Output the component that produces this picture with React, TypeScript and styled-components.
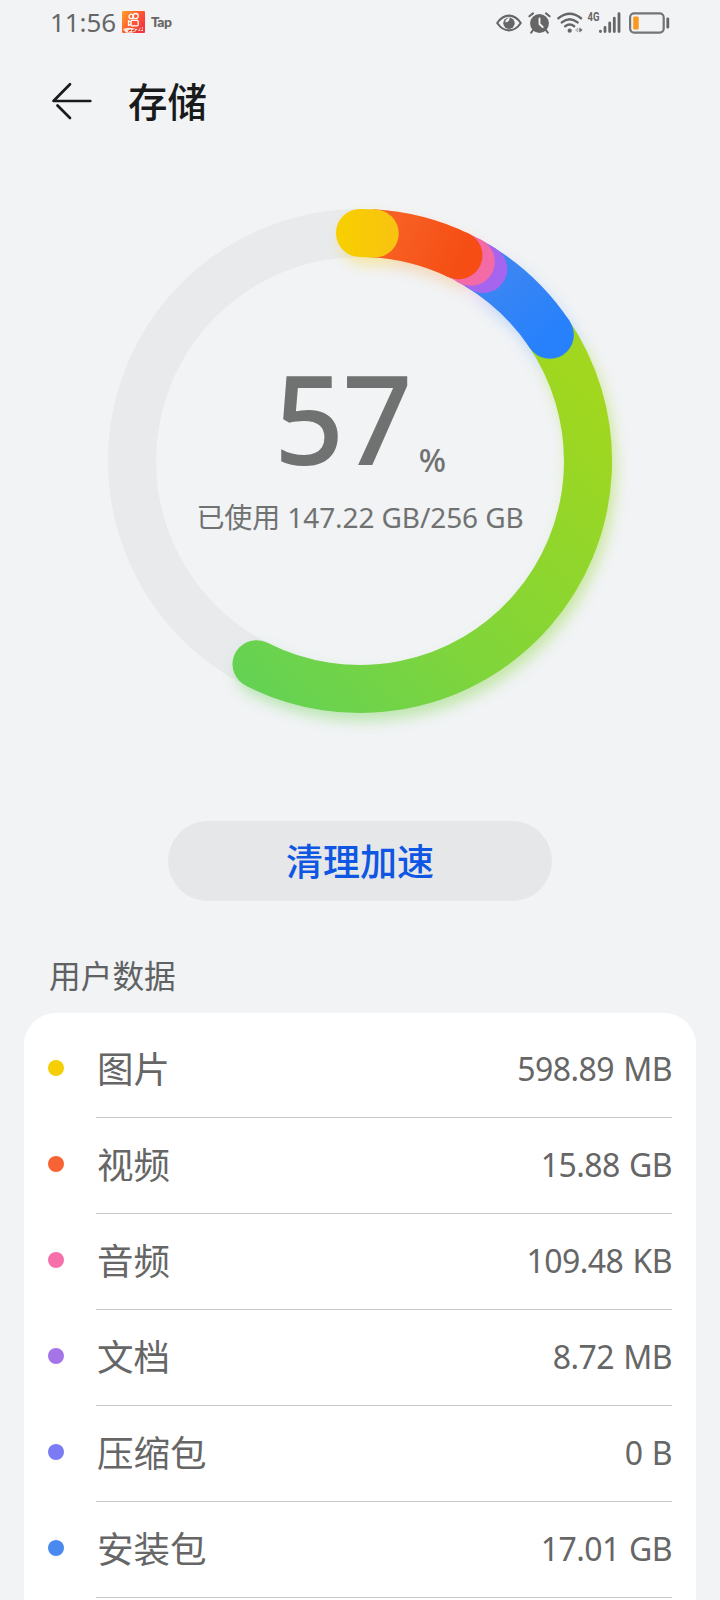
import React from "react";
import styled, { createGlobalStyle } from "styled-components";

const INK = "#666666";
const BACKGROUND = "#f1f3f5";

const GlobalStyle = createGlobalStyle`
  *, *::before, *::after { box-sizing: border-box; }
  html, body { margin: 0; background: ${BACKGROUND}; }
  body {
    font-family: "Noto Sans", "Noto Sans CJK SC", sans-serif;
    color: ${INK};
    overflow: hidden;
  }
`;

const Screen = styled.main`
  width: 720px;
  height: 1600px;
  overflow: hidden;
  display: flex;
  flex-direction: column;
  background: ${BACKGROUND};

  > * { flex-shrink: 0; }
`;

const StatusBar = styled.div`
  display: flex;
  justify-content: space-between;
  height: 45px;
  padding: 0 49px 0 50px;
`;

const StatusGroup = styled.div<{ $gap: number }>`
  display: flex;
  align-items: center;
  gap: ${(p) => p.$gap}px;
`;

const Clock = styled.span`
  width: 66px;
  padding-bottom: 2px;
  font-size: 26px;
  line-height: 42px;
  letter-spacing: -0.1px;
  white-space: nowrap;
`;

const TapMark = styled.span`
  padding-bottom: 2px;
  font-family: Lato, sans-serif;
  font-size: 14px;
  font-weight: 900;
  line-height: 42px;
  letter-spacing: -0.6px;
`;

const Header = styled.header`
  display: flex;
  align-items: center;
  gap: 35px;
  height: 111px;
  padding-left: 51px;
`;

const Title = styled.h1`
  margin: 0;
  padding-bottom: 2px;
  font-family: "Noto Sans CJK SC", sans-serif;
  font-size: 39.5px;
  font-weight: 500;
  line-height: 56px;
  color: #191a1c;
`;

const Gauge = styled.section`
  display: grid;
  justify-items: center;
  height: 665px;

  > * { grid-area: 1 / 1; }
`;

const Readout = styled.div`
  display: flex;
  flex-direction: column;
  align-items: center;
  padding-top: 200px;
`;

const Percent = styled.div`
  display: flex;
  align-items: baseline;
  height: 139px;
  color: #707272;
`;

const PercentValue = styled.span`
  font-size: 123px;
  font-weight: 500;
  line-height: 124px;
  letter-spacing: -2px;
`;

const PercentSign = styled.span`
  font-size: 32px;
  font-weight: 500;
  line-height: 40px;
  margin-left: 8px;
  transform: translateY(7px);
`;

const Usage = styled.p`
  margin: 0;
  font-size: 28px;
  line-height: 44px;
  letter-spacing: -0.1px;
  white-space: nowrap;
  color: #707272;
`;

const CleanButton = styled.button`
  align-self: center;
  width: 384px;
  height: 80px;
  padding: 0 0 3px;
  border: 0;
  border-radius: 40px;
  background: #e5e7e9;
  color: #0f56e3;
  font-family: "Noto Sans CJK SC", sans-serif;
  font-size: 37px;
  font-weight: 500;
`;

const SectionTitle = styled.h2`
  margin: 0;
  height: 112px;
  padding: 50px 0 0 49px;
  font-family: "Noto Sans CJK SC", sans-serif;
  font-size: 31.7px;
  font-weight: 400;
  line-height: 46px;
  color: #606163;
`;

const Card = styled.ul`
  margin: 0 24px;
  padding: 8px 24px 0;
  list-style: none;
  flex: 1 0 0;
  min-height: 0;
  border-radius: 32px 32px 0 0;
  background: #fff;
`;

const Row = styled.li`
  display: flex;
  align-items: center;
  height: 96px;
`;

const Dot = styled.span<{ $color: string }>`
  flex: none;
  width: 16px;
  height: 16px;
  margin: 0 32px 2px 0;
  border-radius: 50%;
  background: ${(p) => p.$color};
`;

const RowBody = styled.div`
  flex: 1;
  display: flex;
  align-items: center;
  justify-content: space-between;
  height: 97px;
  border-bottom: 1px solid #c9c9c9;
`;

const RowLabel = styled.span`
  padding: 0 0 2px 1px;
  font-family: "Noto Sans CJK SC", sans-serif;
  font-size: 36.5px;
  line-height: 52px;
`;

const RowValue = styled.span`
  padding-top: 1px;
  font-size: 32px;
  line-height: 46px;
  letter-spacing: -0.55px;
  word-spacing: 1.5px;
`;

const CENTER_X = 280;
const CENTER_Y = 305;
const RADIUS = 228;

function pointAt(degrees: number) {
  const a = (degrees * Math.PI) / 180;
  return {
    x: CENTER_X + RADIUS * Math.sin(a),
    y: CENTER_Y - RADIUS * Math.cos(a),
  };
}

function arcPath(start: number, end: number) {
  const from = pointAt(start);
  const to = pointAt(end);
  const large = end - start > 180 ? 1 : 0;
  return `M${from.x} ${from.y}A${RADIUS} ${RADIUS} 0 ${large} 1 ${to.x} ${to.y}`;
}

const SEGMENTS = [
  { start: 55, end: 207, paint: "url(#green)", glow: "url(#green)" },
  { start: 31, end: 56.4, paint: "url(#blue)", glow: "#7aaef8" },
  { start: 28, end: 32.7, paint: "#a565ee", glow: "#c9b0f8" },
  { start: 25, end: 29.1, paint: "#f36aa6", glow: "#f8c0d0" },
  { start: 3, end: 25.6, paint: "url(#orange)", glow: "#fbb060" },
  { start: 0, end: 3.7, paint: "url(#yellow)", glow: "#f7d430" },
];

function Segments({ glow = false }: { glow?: boolean }) {
  return (
    <g fill="none" strokeWidth="48">
      {SEGMENTS.map((s) => {
        const cap = pointAt(s.end);
        const color = glow ? s.glow : s.paint;
        return (
          <g key={s.end}>
            <path d={arcPath(s.start, s.end)} stroke={color} />
            <circle cx={cap.x} cy={cap.y} r="24" fill={color} stroke="none" />
          </g>
        );
      })}
      <circle cx={CENTER_X} cy={CENTER_Y - RADIUS} r="24" fill={glow ? "#f7d430" : "url(#yellow)"} stroke="none" />
    </g>
  );
}

function Ring() {
  return (
    <svg width="560" height="620" viewBox="0 0 560 620">
      <defs>
        <linearGradient id="green" gradientUnits="userSpaceOnUse" x1="480" y1="200" x2="155" y2="510">
          <stop offset="0" stopColor="#a1d71e" />
          <stop offset="0.6" stopColor="#80d53a" />
          <stop offset="1" stopColor="#65d253" />
        </linearGradient>
        <linearGradient id="blue" gradientUnits="userSpaceOnUse" x1="400" y1="95" x2="470" y2="180">
          <stop offset="0" stopColor="#4387ef" />
          <stop offset="1" stopColor="#2781fc" />
        </linearGradient>
        <linearGradient id="orange" gradientUnits="userSpaceOnUse" x1="310" y1="75" x2="385" y2="105">
          <stop offset="0" stopColor="#f76024" />
          <stop offset="1" stopColor="#f54d13" />
        </linearGradient>
        <linearGradient id="yellow" gradientUnits="userSpaceOnUse" x1="265" y1="0" x2="318" y2="0">
          <stop offset="0" stopColor="#f7ce00" />
          <stop offset="1" stopColor="#f9c212" />
        </linearGradient>
        <filter id="glow" x="-10%" y="-10%" width="120%" height="120%">
          <feGaussianBlur stdDeviation="7" />
        </filter>
      </defs>
      <circle cx={CENTER_X} cy={CENTER_Y} r={RADIUS} fill="none" stroke="#e8eaec" strokeWidth="48" />
      <g filter="url(#glow)" opacity="0.4" transform="translate(4 8)">
        <Segments glow />
      </g>
      <Segments />
    </svg>
  );
}

function BackArrow() {
  return (
    <svg width="42" height="42" viewBox="0 0 42 42" fill="none" stroke="#191a1c" strokeWidth="2.7" strokeLinecap="round" strokeLinejoin="round">
      <path d="M39.3 21H2.5L19 4.2M6.5 25.5L19 38" />
    </svg>
  );
}

function VideoAppIcon() {
  return (
    <svg width="23" height="23" viewBox="0 0 23 23">
      <defs>
        <linearGradient id="appFill" x1="0" y1="0" x2="1" y2="0.7">
          <stop offset="0" stopColor="#ffa029" />
          <stop offset="0.55" stopColor="#ff5a30" />
          <stop offset="1" stopColor="#f43443" />
        </linearGradient>
      </defs>
      <rect width="23" height="22" rx="1" fill="url(#appFill)" />
      <g fill="none" stroke="#fff" strokeWidth="1.3">
        <circle cx="9.2" cy="5.4" r="2.2" />
        <circle cx="13.6" cy="5.1" r="2.6" />
        <rect x="9" y="9.3" width="7.2" height="5.6" rx="1.2" />
        <path d="M9 11L6.5 9.8V14.4L9 13.4" />
      </g>
      <path d="M1 18Q7 15.8 12 17.5T21 16V20Q14 19 10 21.8H4Z" fill="#ffe8d8" />
      <path d="M6 20.4L9 18.8M10 20L13 18.8M14 20.3L17 18M18 19L20.5 17.5" stroke="#e13a2c" strokeWidth="1.5" />
    </svg>
  );
}

function EyeIcon() {
  return (
    <svg width="26" height="20" viewBox="0 0 26 20">
      <path d="M1.2 10Q6.2 2.6 13 2.6T24.8 10Q19.8 17.4 13 17.4T1.2 10Z" fill="none" stroke={INK} strokeWidth="2.1" strokeLinejoin="round" />
      <circle cx="13" cy="10.2" r="5.7" fill={INK} />
      <path d="M13.4 4.4A3.8 3.8 0 0 1 9.2 9.2A5.8 5.8 0 0 1 13.4 4.4Z" fill={BACKGROUND} />
    </svg>
  );
}

function AlarmIcon() {
  return (
    <svg width="23" height="22" viewBox="0 0 23 22">
      <circle cx="11.5" cy="11.5" r="9.4" fill={INK} />
      <path d="M1.4 4.3L5 1.4M21.6 4.3L18 1.4M5.5 17.5L3.2 20.6M17.5 17.5L19.8 20.6" stroke={INK} strokeWidth="2" strokeLinecap="round" />
      <path d="M11.5 6.5V12L14.7 15" fill="none" stroke={BACKGROUND} strokeWidth="1.9" strokeLinecap="round" />
    </svg>
  );
}

function WifiIcon() {
  return (
    <svg width="26" height="22" viewBox="0 0 26 22">
      <g fill="none" stroke={INK} strokeWidth="2.4" strokeLinecap="round">
        <path d="M1.4 6.2Q12.7-2.6 24 6.2" />
        <path d="M4.8 10.4Q12.7 4 20.6 10.4" />
        <path d="M8.2 14.3Q12.7 10.8 17.2 14.3" />
      </g>
      <circle cx="12.7" cy="18.7" r="2.1" fill={INK} />
      <path d="M22.4 15.4L25.6 18L22.4 20.6Z" fill={INK} />
      <path d="M20.8 16.2L18.6 18L20.8 19.8Z" fill="none" stroke="#9b9b9b" strokeWidth="0.8" />
    </svg>
  );
}

function SignalIcon() {
  return (
    <svg width="34" height="22" viewBox="0 0 34 22" overflow="visible">
      <text x="-1.5" y="9" fontSize="12" fontWeight="700" fill={INK} fontFamily="Roboto, sans-serif" textLength="12" lengthAdjust="spacingAndGlyphs">4G</text>
      <path d="M11.4 19.2V19.6M16 15.4V19.6M20.7 11V19.6M25.3 6.2V19.6M30 1.7V19.6" stroke={INK} strokeWidth="2.8" strokeLinecap="round" />
    </svg>
  );
}

function BatteryIcon() {
  return (
    <svg width="42" height="22" viewBox="0 0 42 22">
      <rect x="1.1" y="1.4" width="33.6" height="19.2" rx="4" fill="none" stroke="#747474" strokeWidth="2.2" />
      <rect x="4.2" y="4.5" width="5.5" height="13" rx="1.2" fill="#fa991e" />
      <rect x="37.4" y="5.5" width="2.8" height="11" rx="1.3" fill={INK} />
    </svg>
  );
}

const CATEGORIES = [
  { label: "图片", value: "598.89 MB", color: "#f5ce06" },
  { label: "视频", value: "15.88 GB", color: "#f76335" },
  { label: "音频", value: "109.48 KB", color: "#f570ab" },
  { label: "文档", value: "8.72 MB", color: "#a574e8" },
  { label: "压缩包", value: "0 B", color: "#7b7bf3" },
  { label: "安装包", value: "17.01 GB", color: "#4a8aef" },
];

export default function App() {
  return (
    <>
      <GlobalStyle />
      <Screen>
        <StatusBar>
          <StatusGroup $gap={6}>
            <Clock>11:56</Clock>
            <VideoAppIcon />
            <TapMark>Tap</TapMark>
          </StatusGroup>
          <StatusGroup $gap={6}>
            <EyeIcon />
            <AlarmIcon />
            <WifiIcon />
            <SignalIcon />
            <BatteryIcon />
          </StatusGroup>
        </StatusBar>
        <Header>
          <BackArrow />
          <Title>存储</Title>
        </Header>
        <Gauge>
          <Ring />
          <Readout>
            <Percent>
              <PercentValue>57</PercentValue>
              <PercentSign>%</PercentSign>
            </Percent>
            <Usage>已使用 147.22 GB/256 GB</Usage>
          </Readout>
        </Gauge>
        <CleanButton>清理加速</CleanButton>
        <SectionTitle>用户数据</SectionTitle>
        <Card>
          {CATEGORIES.map((c) => (
            <Row key={c.label}>
              <Dot $color={c.color} />
              <RowBody>
                <RowLabel>{c.label}</RowLabel>
                <RowValue>{c.value}</RowValue>
              </RowBody>
            </Row>
          ))}
        </Card>
      </Screen>
    </>
  );
}
